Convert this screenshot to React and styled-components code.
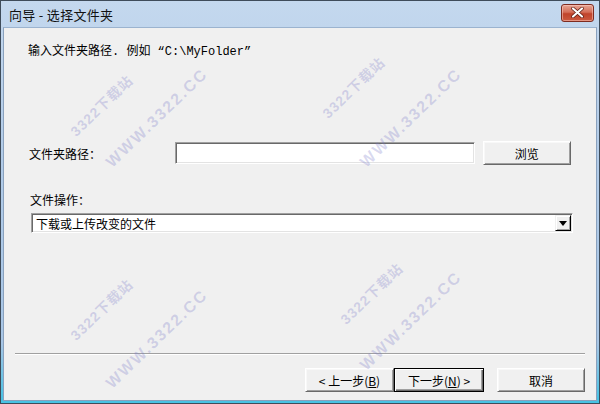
import styled, { createGlobalStyle } from 'styled-components'

const GlobalStyle = createGlobalStyle`
  html, body {
    margin: 0;
    padding: 0;
    background: #ffffff;
  }
  body {
    font-family: "Noto Sans CJK SC", "Liberation Sans", sans-serif;
  }
`

const Window = styled.div`
  position: relative;
  width: 600px;
  height: 404px;
  box-sizing: border-box;
  border: 1px solid #3f4c5a;
  padding: 0 2px 2px;
  display: flex;
  flex-direction: column;
  background: linear-gradient(#c4d8ee, #b1cbe8 40%, #a8c6e6 85%, #48c2e4 99%);
  overflow: hidden;
`

const TitleBar = styled.div`
  height: 26px;
  display: flex;
  align-items: center;
  justify-content: space-between;
  padding: 0 3px 0 6px;
`

const Title = styled.span`
  font-size: 13px;
  color: #111;
  letter-spacing: 0.3px;
`

const CloseButton = styled.div`
  width: 33px;
  height: 18px;
  margin-top: -3px;
  box-sizing: border-box;
  border: 1px solid #7e2b20;
  border-radius: 3px;
  display: flex;
  align-items: center;
  justify-content: center;
  background: linear-gradient(#e7a594, #d46e58 45%, #c0432b 55%, #cc5a40);
  box-shadow: inset 0 0 0 1px rgba(255, 210, 200, 0.5);
`

const Content = styled.div`
  flex: 1;
  display: flex;
  flex-direction: column;
  background: #f0f0f0;
  border: 1px solid #8aa1bd;
  border-top-color: #9bb3cf;
`

const Main = styled.div`
  flex: 1;
  display: flex;
  flex-direction: column;
  padding: 16px 25px 0 23px;
`

const Text = styled.div`
  font-family: "Liberation Mono", "Noto Sans CJK SC", monospace;
  font-size: 12px;
  line-height: 16px;
  color: #000;
  margin-left: ${p => p.$indent || 0}px;
  margin-top: ${p => p.$top || 0}px;
`

const Row = styled.div`
  display: flex;
  align-items: center;
  margin-top: ${p => p.$top || 0}px;
`

const Label = styled.span`
  width: 147px;
  margin-left: 2px;
  font-size: 12px;
  color: #000;
`

const Sunken = styled.div`
  box-sizing: border-box;
  background: #ffffff;
  border-style: solid;
  border-width: 1px;
  border-color: #a0a0a0 #ffffff #ffffff #a0a0a0;
  box-shadow: inset 1px 1px 0 #696969, inset -1px -1px 0 #e3e3e3;
`

const TextInput = styled(Sunken)`
  width: 302px;
  height: 22px;
`

const Button = styled.div`
  box-sizing: border-box;
  width: ${p => p.$w || 89}px;
  height: 24px;
  margin-left: ${p => p.$ml || 0}px;
  display: flex;
  align-items: center;
  justify-content: center;
  font-size: 12px;
  color: #000;
  white-space: pre;
  background: #f0f0f0;
  border: 1px solid;
  border-color: ${p => (p.$default ? '#000' : '#ffffff #696969 #696969 #ffffff')};
  box-shadow: ${p =>
    p.$default
      ? 'inset 1px 1px 0 #fff, inset -1px -1px 0 #696969, inset -2px -2px 0 #a0a0a0'
      : 'inset 1px 1px 0 #f8f8f8, inset -1px -1px 0 #a0a0a0'};

  u {
    text-decoration: underline;
  }
`

const Select = styled(Sunken)`
  width: 542px;
  height: 20px;
  margin-left: 4px;
  margin-top: 3px;
  display: flex;
  align-items: center;
  justify-content: space-between;
  padding: 0 1px 0 4px;
  font-size: 12px;
  color: #000;
`

const ArrowButton = styled.div`
  width: 16px;
  height: 16px;
  box-sizing: border-box;
  background: #f0f0f0;
  border: 1px solid;
  border-color: #f0f0f0 #000 #000 #f0f0f0;
  box-shadow: inset 1px 1px 0 #fff, inset -1px -1px 0 #a0a0a0;
  display: flex;
  align-items: center;
  justify-content: center;
`

const Footer = styled.div`
  display: flex;
  flex-direction: column;
  padding: 0 11px 8px;
`

const Separator = styled.div`
  height: 1px;
  background: #a0a0a0;
  border-bottom: 1px solid #ffffff;
`

const ButtonRow = styled.div`
  display: flex;
  justify-content: flex-end;
  margin-top: 13px;
`

const Watermark = styled.div`
  position: absolute;
  left: ${p => p.$x}px;
  top: ${p => p.$y}px;
  transform: translate(-50%, -50%) rotate(-44deg);
  font-family: "Liberation Sans", "Noto Sans CJK SC", sans-serif;
  font-weight: bold;
  font-size: ${p => p.$size}px;
  letter-spacing: ${p => p.$spacing}px;
  color: rgba(120, 120, 200, 0.28);
  white-space: nowrap;
  pointer-events: none;
`

const marks = [
  { text: '3322下载站', x: 100, y: 104, size: 14, spacing: 1 },
  { text: 'WWW.3322.CC', x: 156, y: 117, size: 16, spacing: 2 },
  { text: '3322下载站', x: 352, y: 86, size: 14, spacing: 1 },
  { text: 'WWW.3322.CC', x: 410, y: 117, size: 16, spacing: 2 },
  { text: '3322下载站', x: 100, y: 308, size: 14, spacing: 1 },
  { text: 'WWW.3322.CC', x: 156, y: 338, size: 16, spacing: 2 },
  { text: '3322下载站', x: 370, y: 292, size: 14, spacing: 1 },
  { text: 'WWW.3322.CC', x: 410, y: 320, size: 16, spacing: 2 },
]

export default function App() {
  return (
    <>
      <GlobalStyle />
      <Window>
        <TitleBar>
          <Title>向导 - 选择文件夹</Title>
          <CloseButton>
            <svg width="13" height="11" viewBox="0 0 13 11">
              <path d="M2 1.5 L11 9.5 M11 1.5 L2 9.5" stroke="#5a1a10" strokeWidth="3.6" strokeLinecap="round" />
              <path d="M2 1.5 L11 9.5 M11 1.5 L2 9.5" stroke="#ffffff" strokeWidth="2.2" strokeLinecap="round" />
            </svg>
          </CloseButton>
        </TitleBar>
        <Content>
          <Main>
            <Text $indent={1}>输入文件夹路径. 例如 “C:\MyFolder”</Text>
            <Row $top={81}>
              <Label>文件夹路径：</Label>
              <TextInput />
              <Button $ml={8}>浏览</Button>
            </Row>
            <Text $indent={3} $top={29}>文件操作：</Text>
            <Select>
              <span>下载或上传改变的文件</span>
              <ArrowButton>
                <svg width="8" height="5" viewBox="0 0 8 5">
                  <path d="M0 0 H8 L4 5 Z" fill="#000" />
                </svg>
              </ArrowButton>
            </Select>
          </Main>
          <Footer>
            <Separator />
            <ButtonRow>
              <Button $w={89}><span>&lt; 上一步(<u>B</u>)</span></Button>
              <Button $w={90} $default><span>下一步(<u>N</u>) &gt;</span></Button>
              <Button $w={88} $ml={13}>取消</Button>
            </ButtonRow>
          </Footer>
        </Content>
        {marks.map((m, i) => (
          <Watermark key={i} $x={m.x} $y={m.y} $size={m.size} $spacing={m.spacing}>
            {m.text}
          </Watermark>
        ))}
      </Window>
    </>
  )
}
